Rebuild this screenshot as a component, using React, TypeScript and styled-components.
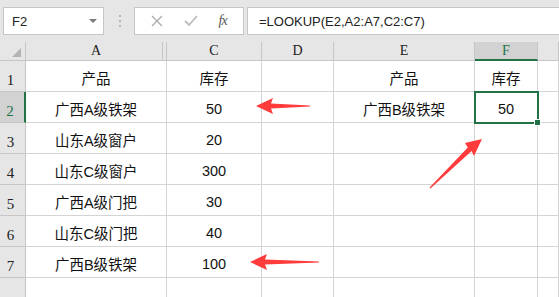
import { Fragment } from "react";
import styled, { createGlobalStyle, css } from "styled-components";

const GlobalStyle = createGlobalStyle`
  html, body {
    margin: 0;
    padding: 0;
    background: #ffffff;
  }
  body {
    font-family: "Liberation Sans", "Noto Sans CJK SC", sans-serif;
  }
`;

const Window = styled.div`
  position: relative;
  width: 559px;
  height: 297px;
  overflow: hidden;
  background: #ffffff;
`;

const Toolbar = styled.div`
  display: flex;
  align-items: center;
  height: 42px;
  padding-left: 3px;
  box-sizing: border-box;
  background: #e6e6e6;
`;

const NameBox = styled.div`
  display: flex;
  align-items: center;
  justify-content: space-between;
  width: 101px;
  height: 28px;
  box-sizing: border-box;
  padding: 0 6px 0 8px;
  background: #ffffff;
  border: 1px solid #c6c6c6;
  font-size: 13px;
  color: #222;
`;

const DropTriangle = styled.span`
  width: 0;
  height: 0;
  border-left: 4px solid transparent;
  border-right: 4px solid transparent;
  border-top: 4px solid #7a7a7a;
`;

const Grip = styled.div`
  display: flex;
  flex-direction: column;
  gap: 3px;
  margin: 0 13px 0 15px;

  span {
    width: 2px;
    height: 2px;
    background: #b4b4b4;
  }
`;

const ButtonGroup = styled.div`
  display: flex;
  align-items: center;
  justify-content: space-around;
  width: 110px;
  height: 28px;
  box-sizing: border-box;
  padding: 0 6px;
  background: #ffffff;
  border: 1px solid #c6c6c6;
`;

const Fx = styled.span`
  font-family: "Liberation Serif", serif;
  font-style: italic;
  font-size: 14px;
  color: #555;
  letter-spacing: -1px;
`;

const FormulaBox = styled.div`
  display: flex;
  align-items: center;
  flex: 1;
  height: 28px;
  margin-left: 3px;
  box-sizing: border-box;
  padding-left: 11px;
  background: #ffffff;
  border: 1px solid #c6c6c6;
  border-right: none;
  font-size: 13px;
  color: #222;
`;

const Sheet = styled.div`
  display: grid;
  grid-template-columns: 26px 141px 95px 72px 141px 63px 1fr;
  grid-template-rows: 19px;
  grid-auto-rows: 31px;
  background: #ffffff;
`;

const ColHead = styled.div<{ active?: boolean; hiddenNext?: boolean }>`
  display: flex;
  align-items: center;
  justify-content: center;
  box-sizing: border-box;
  background: #e6e6e6;
  border-right: 1px solid #c6c6c6;
  border-bottom: 1px solid #c6c6c6;
  font-family: "Liberation Serif", serif;
  font-size: 14px;
  color: #222;
  position: relative;

  ${({ hiddenNext }) =>
    hiddenNext &&
    css`
      box-shadow: inset -3px 0 0 #e6e6e6, inset -4px 0 0 #c6c6c6;
    `}

  ${({ active }) =>
    active &&
    css`
      background: #d2d2d2;
      color: #217346;
      border-bottom: 2px solid #217346;
    `}
`;

const Corner = styled(ColHead)`
  &::after {
    content: "";
    position: absolute;
    right: 4px;
    bottom: 3px;
    border-left: 9px solid transparent;
    border-bottom: 9px solid #b4b4b4;
  }
`;

const RowHead = styled.div<{ active?: boolean }>`
  display: flex;
  align-items: flex-end;
  justify-content: center;
  box-sizing: border-box;
  padding: 0 4px 0 0;
  background: #e6e6e6;
  border-right: 1px solid #c6c6c6;
  border-bottom: 1px solid #c6c6c6;
  font-family: "Liberation Serif", serif;
  font-size: 15px;
  line-height: 22px;
  color: #222;

  ${({ active }) =>
    active &&
    css`
      background: #d2d2d2;
      color: #217346;
      border-right: 2px solid #217346;
    `}
`;

const Cell = styled.div<{ selected?: boolean }>`
  display: flex;
  align-items: center;
  justify-content: center;
  box-sizing: border-box;
  padding-top: 3px;
  border-right: 1px solid #d4d4d4;
  border-bottom: 1px solid #d4d4d4;
  font-size: 14.5px;
  color: #111;
  position: relative;

  ${({ selected }) =>
    selected &&
    css`
      outline: 2px solid #217346;
      outline-offset: -1px;
      z-index: 1;

      &::after {
        content: "";
        position: absolute;
        right: -4px;
        bottom: -4px;
        width: 5px;
        height: 5px;
        background: #217346;
        border: 1px solid #ffffff;
      }
    `}
`;

const Arrows = styled.svg`
  position: absolute;
  left: 0;
  top: 0;
  pointer-events: none;
  z-index: 2;
`;

const columns = ["A", "C", "D", "E", "F", ""];

const rows: string[][] = [
  ["产品", "库存", "", "产品", "库存", ""],
  ["广西A级铁架", "50", "", "广西B级铁架", "50", ""],
  ["山东A级窗户", "20", "", "", "", ""],
  ["山东C级窗户", "300", "", "", "", ""],
  ["广西A级门把", "30", "", "", "", ""],
  ["山东C级门把", "40", "", "", "", ""],
  ["广西B级铁架", "100", "", "", "", ""],
  ["", "", "", "", "", ""],
];

export default function App() {
  return (
    <Window>
      <GlobalStyle />
      <Toolbar>
        <NameBox>
          F2
          <DropTriangle />
        </NameBox>
        <Grip>
          <span />
          <span />
          <span />
        </Grip>
        <ButtonGroup>
          <svg width="12" height="12" viewBox="0 0 12 12">
            <path d="M1 1 L11 11 M11 1 L1 11" stroke="#ababab" strokeWidth="1.3" fill="none" />
          </svg>
          <svg width="14" height="12" viewBox="0 0 14 12">
            <path d="M1 6 L5 10 L13 1" stroke="#bcbcbc" strokeWidth="1.8" fill="none" />
          </svg>
          <Fx>fx</Fx>
        </ButtonGroup>
        <FormulaBox>=LOOKUP(E2,A2:A7,C2:C7)</FormulaBox>
      </Toolbar>

      <Sheet>
        <Corner />
        {columns.map((c, i) => (
          <ColHead key={i} hiddenNext={c === "A"} active={c === "F"}>
            {c}
          </ColHead>
        ))}
        {rows.map((row, r) => (
          <Fragment key={r}>
            {/* row 8 is cut by the window edge, its number falls below it */}
            <RowHead active={r === 1}>{r < 7 ? r + 1 : ""}</RowHead>
            {row.map((v, c) => (
              <Cell key={c} selected={r === 1 && c === 4}>
                {v}
              </Cell>
            ))}
          </Fragment>
        ))}
      </Sheet>

      <Arrows width="559" height="297" viewBox="0 0 559 297">
        <g fill="#ff3b3b">
          <polygon points="256,106 273,98 271,103.5 310,105.6 310,106.4 271,108.5 273,114" />
          <polygon points="250,262 267,254 265,259.5 319,261.6 319,262.4 265,264.5 267,270" />
          <polygon points="482,139 465,143 467.8,147.4 429.6,187.6 430.4,188.4 471.6,151 474,156" />
        </g>
      </Arrows>
    </Window>
  );
}
